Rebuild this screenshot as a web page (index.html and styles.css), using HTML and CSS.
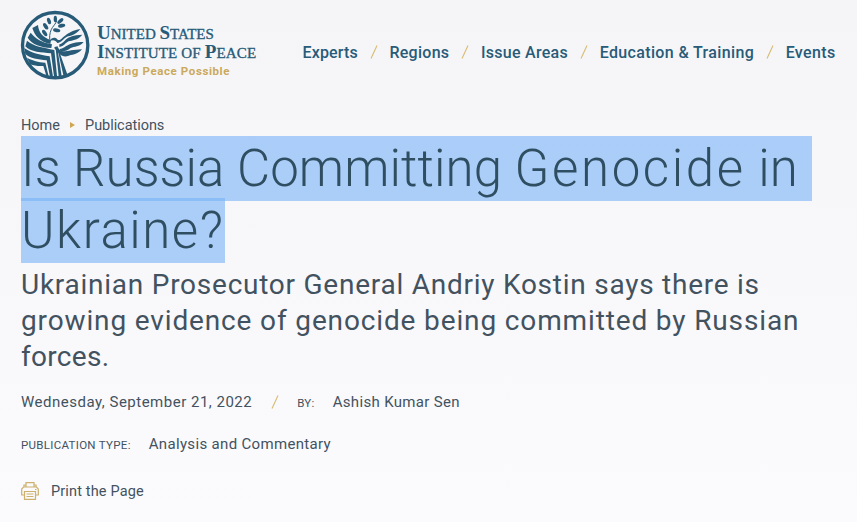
FILE: index.html
```html
<!DOCTYPE html>
<html lang="en">
<head>
<meta charset="utf-8">
<title>Is Russia Committing Genocide in Ukraine?</title>
<link rel="stylesheet" href="styles.css">
</head>
<body>
<header class="header">
  <a class="brand">
    <svg class="emblem" viewBox="24 24 228 228" aria-hidden="true">
      <circle cx="135.500" cy="135.500" r="98" fill="none" stroke="#285b78" stroke-width="10"/>
      <g fill="#285b78">
        <path d="M67 84L84 75C86 97 97 112 123 120L121 132C90 126 74 107 67 84Z"/>
        <path d="M53 113L62 98C78 118 95 127 126 133L124 144C92 142 67 134 53 113Z"/>
        <path d="M46 139L51 122C72 140 100 142 133 150L142 237L133 237L123 160C95 157 62 157 46 139Z"/>
        <path d="M46 162L43 144C65 159 88 164 119 169L130 236L121 235L110 181C84 178 60 176 46 162Z"/>
        <path d="M60 193L51 173C70 183 83 186 106 188L117 233L110 230L100 198C85 199 72 197 60 193Z"/>
        <path d="M137 146L143 151L156 235L147 237Z"/>
        <path d="M139 139L148 155L174 229L162 234L145 158L132 143Z"/>
        <path d="M119 122C124 113 136 109 143 119C157 126 158 97 211 87C198 105 181 107 171 110C161 114 155 127 142 129C136 120 132 119 119 122Z"/>
        <path d="M148 133C169 127 162 106 217 104C201 122 187 120 176 124C165 129 163 139 148 141Z"/>
        <path d="M149 147C170 144 170 126 221 126C207 142 193 138 182 144C171 152 162 155 151 153Z"/>
        <path d="M142 138C153 166 169 149 216 148C201 166 184 163 174 168C157 174 143 159 137 144Z"/>
        <ellipse cx="136" cy="57" rx="5" ry="10"/>
        <ellipse cx="117" cy="63" rx="5.500" ry="10" transform="rotate(-18 117 63)"/>
        <ellipse cx="107" cy="79" rx="5.500" ry="11" transform="rotate(-35 107 79)"/>
        <ellipse cx="104" cy="99" rx="5.500" ry="11" transform="rotate(-35 104 99)"/>
        <ellipse cx="151" cy="63" rx="5.500" ry="11" transform="rotate(48 151 63)"/>
        <ellipse cx="155" cy="77" rx="5.500" ry="11" transform="rotate(78 155 77)"/>
        <ellipse cx="140" cy="91" rx="5.500" ry="11" transform="rotate(100 140 91)"/>
      </g>
      <path d="M140 62C136 78 117 82 119 119" fill="none" stroke="#285b78" stroke-width="3"/>
    </svg>
    <span class="wordmark">
      <span class="word w1"><b>U</b>NITED <b>S</b>TATES</span>
      <span class="word w2"><b>I</b>NSTITUTE OF <b>P</b>EACE</span>
      <span class="tagline">Making Peace Possible</span>
    </span>
  </a>
  <nav class="nav">
    <a class="n1">Experts</a><svg class="slash" viewBox="0 0 8 14"><path d="M1 13.500L7 .5"/></svg>
    <a class="n2">Regions</a><svg class="slash" viewBox="0 0 8 14"><path d="M1 13.500L7 .5"/></svg>
    <a class="n3">Issue Areas</a><svg class="slash" viewBox="0 0 8 14"><path d="M1 13.500L7 .5"/></svg>
    <a class="n4">Education &amp; Training</a><svg class="slash" viewBox="0 0 8 14"><path d="M1 13.500L7 .5"/></svg>
    <a class="n5">Events</a>
  </nav>
</header>
<main>
  <div class="crumbs"><a class="c1">Home</a><i class="arrow"></i><a class="c2">Publications</a></div>
  <h1><span class="line t1">Is Russia Committing <span class="wide">Genocide</span> in</span><span class="line t2">Ukraine?</span></h1>
  <h2><span class="s1">Ukrainian Prosecutor General Andriy Kostin says there is</span><span class="s2">growing evidence of genocide being committed by Russian</span><span class="s3">forces.</span></h2>
  <div class="meta"><span class="date">Wednesday, September 21, 2022</span><svg class="slash small" viewBox="0 0 8 14"><path d="M1 13.500L7 .5"/></svg><span class="label by">BY:</span><span class="author">Ashish Kumar Sen</span></div>
  <div class="meta type"><span class="label pub">PUBLICATION TYPE:</span><span class="kind">Analysis and Commentary</span></div>
  <div class="print">
    <svg class="printer" viewBox="0 0 18 18" aria-hidden="true"><path d="M5 5V.7h8V5M3 5V3h2M15 5V3h-2M3.500 13H.7V7L2.500 5h13l1.800 2v6h-2.800M3.500 9.500h11v7.800h-11zM5.500 12h7M5.500 14.500h7M3 5h12"/><path d="M14 7.500h1.500"/></svg>
    <span class="p1">Print the Page</span>
  </div>
</main>
</body>
</html>
```
FILE: styles.css
```css
* { box-sizing: border-box; }
body {
  margin: 0;
  height: 522px;
  overflow: hidden;
  background: linear-gradient(#f5f5f8, #fbfbfd);
  color: #43525f;
  font-family: Roboto, "Liberation Sans", sans-serif;
  white-space: nowrap;
}
span, a { white-space: nowrap; }
.header { display: flex; height: 116px; padding-left: 18px; }
.brand { display: flex; flex: none; width: 284.5px; padding-top: 8px; }
.emblem { width: 76px; height: 76px; flex: none; }
.wordmark { display: flex; flex-direction: column; padding: 15px 0 0 3px; }
.word { height: 19px; line-height: 19px; font-family: "Liberation Serif", serif; font-size: 15px; color: #285b78; -webkit-text-stroke: .35px #285b78; }
.word b { font-size: 19px; -webkit-text-stroke: 0; }
.w2 { letter-spacing: .15px; }
.tagline { font: 700 11.5px/16px Roboto, sans-serif; color: #cba95b; margin-top: 2px; letter-spacing: .6px; }
.nav { display: flex; align-items: center; height: 24px; margin-top: 40px; font-size: 16px; font-weight: 500; color: #285b78; }
.n1 { letter-spacing: .15px; }
.n2 { letter-spacing: .28px; }
.n3 { letter-spacing: .28px; }
.n4 { letter-spacing: .36px; }
.n5 { letter-spacing: .35px; }
.slash { width: 8px; height: 14px; margin: 0 11.8px; fill: none; stroke: #d9bb72; stroke-width: 1.1; flex: none; }
main { padding-left: 21px; }
.crumbs { display: flex; align-items: center; height: 20px; padding-bottom: 2px; font-size: 14.5px; }
.c2 { letter-spacing: -.05px; }
.arrow { border: 3px solid transparent; border-left: 5px solid #d0a653; border-right: 0; margin: 0 10px; }
h1 { display: flex; flex-direction: column; align-items: flex-start; margin: 0; font-size: 51px; font-weight: 300; color: #304e61; }
.line { height: 65px; line-height: 65px; background: rgba(118, 178, 247, .6); }
.t1 { width: 791px; letter-spacing: .08px; }
.t2 { width: 204px; margin-top: -3px; letter-spacing: 1.55px; }
.wide { letter-spacing: 2.6px; }
h2 { display: flex; flex-direction: column; align-items: flex-start; margin: 4px 0 0; font-size: 28px; line-height: 36px; font-weight: 400; }
.s1 { letter-spacing: .75px; }
.s2 { letter-spacing: .86px; }
.s3 { letter-spacing: .3px; }
.meta { display: flex; align-items: center; height: 24px; margin-top: 15px; font-size: 15px; }
.meta.type { margin-top: 18px; }
.date { letter-spacing: .5px; }
.author, .kind { letter-spacing: .33px; }
.small { margin: 0 18px 0 19px; }
.label { font-size: 11.5px; padding-top: 2px; margin-right: 18px; letter-spacing: .3px; }
.print { display: flex; align-items: center; height: 24px; margin-top: 23px; font-size: 14.5px; font-weight: 400; letter-spacing: .15px; }
.printer { width: 18px; height: 18px; margin-right: 12px; fill: none; stroke: #cdb16c; stroke-width: 1.2; }
```
